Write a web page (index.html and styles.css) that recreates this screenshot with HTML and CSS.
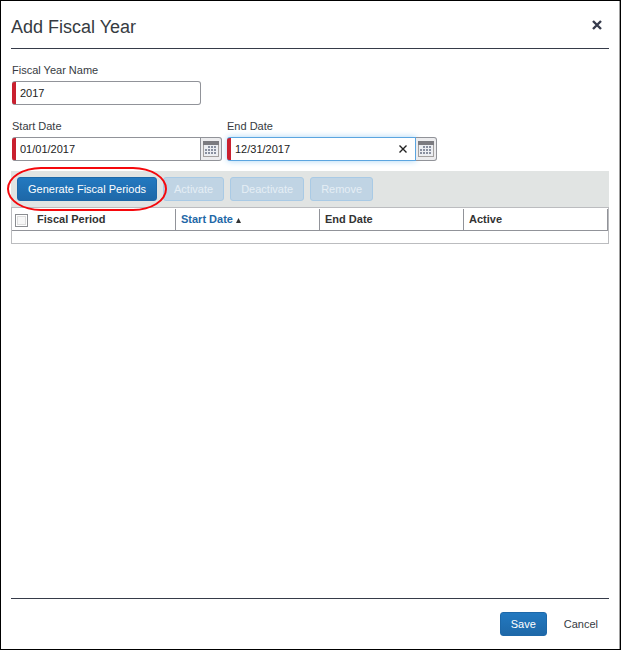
FILE: index.html
```html
<!DOCTYPE html>
<html lang="en">
<head>
<meta charset="utf-8">
<title>Add Fiscal Year</title>
<link rel="stylesheet" href="styles.css">
</head>
<body>
<svg width="0" height="0" class="sprite" aria-hidden="true">
  <symbol id="calendar" viewBox="0 0 16 16">
    <path fill="#a3a09f" d="M0 0h16v16H0z"/>
    <path fill="#7b7b80" d="M0 0h16v4H0z"/>
    <path fill="#eceef2" d="M1 4h14v11H1z"/>
    <path fill="#8990a0" d="M5 5h2v2H5zM8 5h2v2H8zM11 5h2v2h-2zM2 8h2v2H2zM5 8h2v2H5zM8 8h2v2H8zM11 8h2v2h-2zM2 11h2v2H2zM5 11h2v2H5zM8 11h2v2H8zM11 11h2v2h-2z"/>
  </symbol>
</svg>
<main class="dialog">
  <header class="dialog-header">
    <h1>Add Fiscal Year</h1>
    <button type="button" class="close" aria-label="Close">
      <svg width="10" height="10" viewBox="0 0 10 10"><path d="M1 1l8 8M9 1l-8 8" stroke="#363b4c" stroke-width="2.4"/></svg>
    </button>
  </header>
  <form class="form">
    <div class="field">
      <label for="name">Fiscal Year Name</label>
      <input id="name" class="input" type="text" value="2017">
    </div>
    <div class="dates">
      <div class="field">
        <label for="start">Start Date</label>
        <div class="date">
          <input id="start" class="input" type="text" value="01/01/2017">
          <button type="button" class="picker" aria-label="Choose start date"><svg width="16" height="16"><use href="#calendar"/></svg></button>
        </div>
      </div>
      <div class="field">
        <label for="end">End Date</label>
        <div class="date">
          <input id="end" class="input active" type="text" value="12/31/2017">
          <button type="button" class="clear" aria-label="Clear"><svg width="8" height="8" viewBox="0 0 8 8"><path d="M.5.5l7 7M7.5.5l-7 7" stroke="#222" stroke-width="1.4"/></svg></button>
          <button type="button" class="picker" aria-label="Choose end date"><svg width="16" height="16"><use href="#calendar"/></svg></button>
        </div>
      </div>
    </div>
  </form>
  <section class="periods">
    <div class="toolbar">
      <div class="marked">
        <button type="button" class="button">Generate Fiscal Periods</button>
      </div>
      <button type="button" class="button" disabled>Activate</button>
      <button type="button" class="button" disabled>Deactivate</button>
      <button type="button" class="button" disabled>Remove</button>
    </div>
    <div class="grid">
      <table>
        <thead>
          <tr>
            <th class="check"><input type="checkbox" aria-label="Select all"></th>
            <th class="period">Fiscal Period</th>
            <th class="sorted" aria-sort="ascending">Start Date <svg width="5" height="5" viewBox="0 0 5 5"><path d="M2.5 0L5 5H0z" fill="#333"/></svg></th>
            <th>End Date</th>
            <th>Active</th>
          </tr>
        </thead>
      </table>
    </div>
  </section>
  <footer class="dialog-footer">
    <button type="button" class="button">Save</button>
    <button type="button" class="button plain">Cancel</button>
  </footer>
</main>
</body>
</html>
```
FILE: styles.css
```css
* {
  box-sizing: border-box;
}

body {
  margin: 0;
  background: #fff;
  color: #363b42;
  font: 11px/14px "Liberation Sans", Arial, sans-serif;
}

button,
input {
  font: inherit;
  color: inherit;
}

button {
  padding: 0;
  border: 0;
  background: none;
}

svg {
  display: block;
}

.sprite {
  position: absolute;
}

.dialog {
  display: flex;
  flex-direction: column;
  min-height: 100vh;
  padding: 0 11px 0 10px;
  border: 1px solid #000;
  box-shadow: inset -1px 0 #a0a0a0;
}

.dialog-header {
  display: flex;
  align-items: center;
  justify-content: space-between;
  height: 48px;
  padding: 4px 7px 0 0;
  border-bottom: 1px solid #363b49;
}

h1 {
  margin: 0;
  font-size: 18px;
  line-height: 24px;
  font-weight: normal;
}

.close {
  margin-bottom: 4px;
}

.form {
  display: grid;
  gap: 14px;
  padding: 14px 1px 10px;
}

.field {
  display: grid;
  gap: 4px;
  justify-items: start;
}

.dates {
  display: flex;
  gap: 5px;
}

.date {
  display: flex;
  position: relative;
}

.input {
  width: 189px;
  height: 24px;
  padding: 0 4px 0 8px;
  border: 1px solid #919399;
  border-left: 0;
  border-radius: 3px;
  background: linear-gradient(#c9202f, #c9202f) left / 4px 100% no-repeat border-box #fff;
  outline: 0;
  color: #222;
}

.date .input {
  border-radius: 3px 0 0 3px;
}

.input.active {
  border-color: #5ba5e0;
  box-shadow: 0 0 6px #a9d5f5;
}

.picker {
  display: grid;
  place-items: center;
  width: 21px;
  border: 1px solid #919399;
  border-left: 0;
  border-radius: 0 3px 3px 0;
  background: #ececee;
}

.clear {
  position: absolute;
  top: 8px;
  right: 30px;
}

.toolbar {
  display: flex;
  align-items: center;
  gap: 6px;
  height: 36px;
  padding: 0 6px;
  background: #e1e4e3;
}

.marked {
  position: relative;
}

.marked::after {
  content: "";
  position: absolute;
  inset: -10px;
  z-index: 1;
  border: 2px solid #f5080c;
  border-radius: 34px / 22px;
  pointer-events: none;
}

.button {
  height: 24px;
  padding: 0 10px;
  border: 1px solid #1d68a9;
  border-radius: 3px;
  background: linear-gradient(#2379c0, #1e68a8);
  color: #fff;
}

.button:disabled {
  border-color: #a9cae5;
  background: #c0d4e4;
  color: #e5eef5;
}

.button.plain {
  border-color: transparent;
  background: none;
  color: #363b42;
}

.grid {
  padding: 1px 0 12px;
  border: 1px solid #bbbcbf;
}

table {
  width: 100%;
  table-layout: fixed;
  border-collapse: separate;
  border-spacing: 0;
}

th {
  height: 22px;
  padding: 0 5px 2px;
  border-right: 1px solid #919399;
  border-bottom: 1px solid #919399;
  text-align: left;
  color: #333;
}

.check {
  width: 20px;
  padding: 0 0 0 3px;
  border-right: 0;
}

.check input {
  display: block;
  appearance: none;
  width: 13px;
  height: 13px;
  margin: 2px 0 0;
  border: 1px solid #8b8d91;
  background: #f7f7f7;
  box-shadow: inset 0 0 0 1px #fff, inset 0 0 0 2px #ddd;
}

.sorted {
  color: #1f68a7;
}

.sorted svg {
  display: inline-block;
}

.dialog-footer {
  display: flex;
  gap: 6px;
  justify-content: flex-end;
  margin-top: auto;
  padding: 13px 0;
  border-top: 1px solid #363b49;
}
```
